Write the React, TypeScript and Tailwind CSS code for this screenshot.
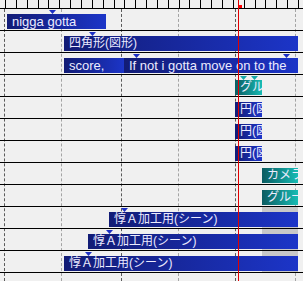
import React from "react";

type Clip = {
  left: number;
  right: number;
  label: string;
  kind: "blue" | "teal";
};

type Track = {
  clips: Clip[];
  marks: { x: number; kind: "blue" | "teal" }[];
  shade?: boolean;
};

const PLAYHEAD = 238;

const tracks: Track[] = [
  { clips: [{ left: 7, right: 106, label: "nigga gotta", kind: "blue" }], marks: [{ x: 52, kind: "blue" }] },
  { clips: [{ left: 64, right: 298, label: "四角形(図形)", kind: "blue" }], marks: [{ x: 92, kind: "blue" }] },
  {
    clips: [
      { left: 64, right: 124, label: "score,", kind: "blue" },
      { left: 124, right: 298, label: "If not i gotta move on to the", kind: "blue" },
    ],
    marks: [
      { x: 136, kind: "blue" },
      { x: 286, kind: "blue" },
    ],
  },
  {
    clips: [{ left: 235, right: 262, label: "グループ制御", kind: "teal" }],
    marks: [
      { x: 243, kind: "teal" },
      { x: 254, kind: "teal" },
    ],
  },
  { clips: [{ left: 235, right: 262, label: "円(図形)", kind: "blue" }], marks: [] },
  { clips: [{ left: 235, right: 262, label: "円(図形)", kind: "blue" }], marks: [] },
  { clips: [{ left: 235, right: 262, label: "円(図形)", kind: "blue" }], marks: [] },
  { clips: [{ left: 262, right: 298, label: "カメラ制御", kind: "teal" }], marks: [] },
  { clips: [{ left: 262, right: 298, label: "グループ制御", kind: "teal" }], marks: [] },
  { clips: [{ left: 109, right: 298, label: "惇Ａ加工用(シーン)", kind: "blue" }], marks: [{ x: 124, kind: "blue" }], shade: true },
  { clips: [{ left: 88, right: 298, label: "惇Ａ加工用(シーン)", kind: "blue" }], marks: [{ x: 109, kind: "blue" }], shade: true },
  { clips: [{ left: 64, right: 298, label: "惇Ａ加工用(シーン)", kind: "blue" }], marks: [{ x: 88, kind: "blue" }], shade: true },
  { clips: [], marks: [] },
];

const gridLines = [
  { x: 4, dark: true },
  { x: 61, dark: false },
  { x: 121, dark: true },
  { x: 178, dark: false },
  { x: 235, dark: true },
  { x: 295, dark: false },
];

// japanese names are drawn a size smaller than latin ones
const isJp = (s: string) => /[^\x00-\x7F]/.test(s);

const Ruler = () => {
  const ticks = Array.from({ length: 28 }, (_, i) => Math.round(5 + i * 10.85));
  return (
    <div className="h-[9px] border-b border-black relative">
      <svg width="303" height="8" className="absolute left-0 top-0">
        {ticks.map((x) => (
          <line key={x} x1={x + 0.5} y1={0} x2={x + 0.5} y2={8} stroke="#000" strokeWidth={1} />
        ))}
      </svg>
      <div className="absolute left-[239px] top-[5px] w-[3px] h-[3px] bg-[#ff0000]" />
    </div>
  );
};

const Mark = ({ x, kind }: { x: number; kind: "blue" | "teal" }) => (
  <svg width="7" height="4" className="absolute top-[1px]" style={{ left: x - 3 }}>
    <polygon points="0,0 7,0 3.5,4" fill={kind === "blue" ? "#1c2fc4" : "#14a8a8"} />
  </svg>
);

const ClipBar = ({ clip }: { clip: Clip }) => {
  const crosses = PLAYHEAD >= clip.left && PLAYHEAD < clip.right;
  return (
    <div
      className={
        "absolute top-[5px] h-[15px] overflow-hidden whitespace-nowrap pl-[5px] leading-[15px] text-[#ecebff] " +
        (isJp(clip.label) ? "text-[12px] " : "text-[13px] ") +
        (clip.kind === "blue"
          ? "bg-linear-to-r from-[#121c76] to-[#1c35c8]"
          : "bg-linear-to-r from-[#0b5c62] to-[#17bcb4]")
      }
      style={{ left: clip.left, width: clip.right - clip.left }}
    >
      {clip.label}
      {crosses && (
        <div className="absolute top-0 bottom-0 w-px bg-[#2cc48a]" style={{ left: PLAYHEAD - clip.left }} />
      )}
    </div>
  );
};

export default function App() {
  return (
    <div
      className="relative w-[303px] h-[281px] overflow-hidden bg-[#f0f0f0]"
      style={{ fontFamily: '"Liberation Sans", "Noto Sans CJK JP", sans-serif' }}
    >
      {gridLines.map((g) => (
        <div
          key={g.x}
          className={
            "absolute top-[9px] bottom-0 w-0 border-l border-dashed " +
            (g.dark ? "border-[#5a5a5a]" : "border-[#a4a4a4]")
          }
          style={{ left: g.x }}
        />
      ))}

      <div className="relative">
        <Ruler />
        {tracks.map((t, i) => (
          <div key={i} className="relative h-[22px] border-b border-black">
            {t.shade && <div className="absolute left-[262px] w-[36px] top-0 bottom-0 bg-[#c8c8c8]" />}
            {t.marks.map((m) => (
              <Mark key={m.x} x={m.x} kind={m.kind} />
            ))}
            {t.clips.map((c) => (
              <ClipBar key={c.left} clip={c} />
            ))}
          </div>
        ))}
      </div>

      <div className="absolute left-[238px] top-0 bottom-0 w-px bg-[#e00000] pointer-events-none" />
    </div>
  );
}
